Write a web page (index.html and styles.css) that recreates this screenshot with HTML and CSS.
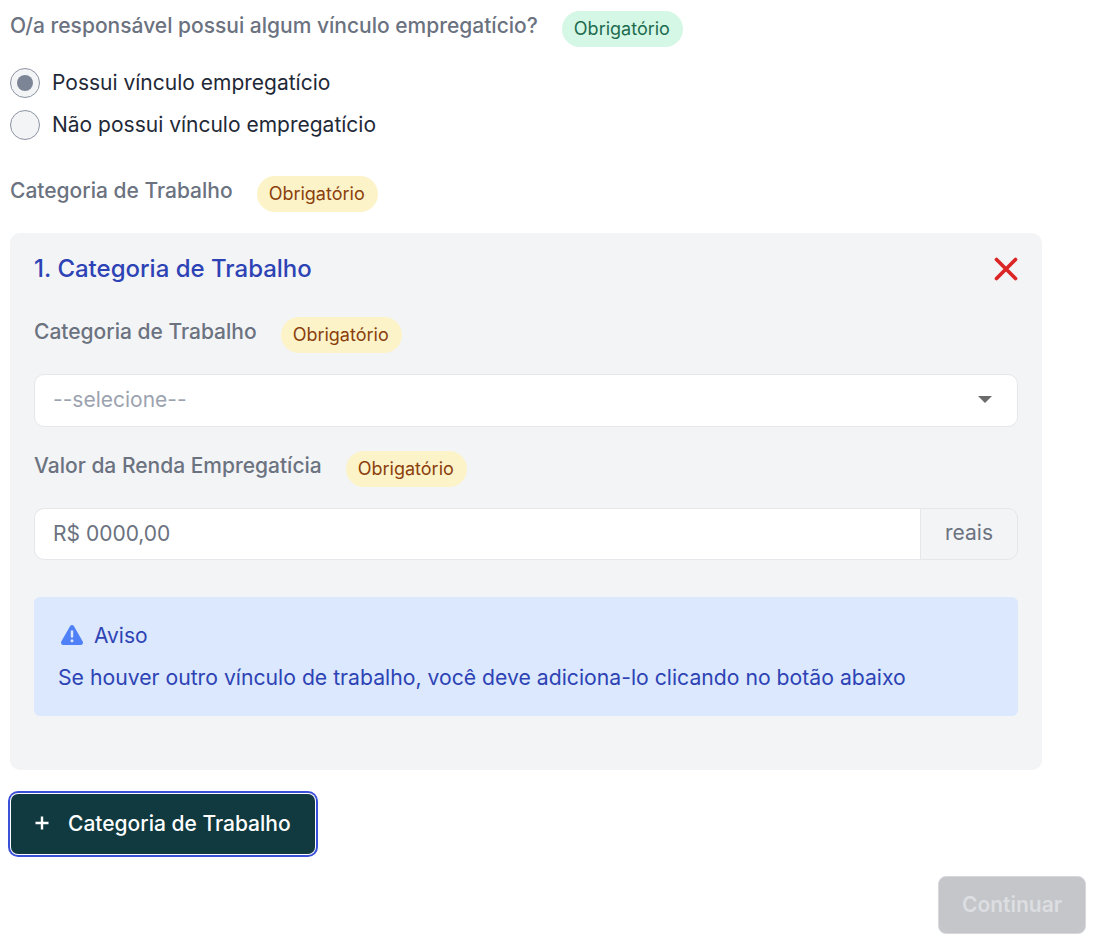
FILE: index.html
```html
<!DOCTYPE html>
<html lang="pt-BR">
<head>
    <meta charset="UTF-8">
    <title>Categoria de Trabalho</title>
    <link rel="stylesheet" href="styles.css">
</head>
<body>
<div class="page">
    <div class="field-label first">
        <span>O/a responsável possui algum vínculo empregatício?</span>
        <span class="badge badge-green">Obrigatório</span>
    </div>

    <div class="radio-row">
        <span class="radio checked"></span>
        <span class="radio-text">Possui vínculo empregatício</span>
    </div>
    <div class="radio-row">
        <span class="radio"></span>
        <span class="radio-text">Não possui vínculo empregatício</span>
    </div>

    <div class="field-label second">
        <span>Categoria de Trabalho</span>
        <span class="badge badge-yellow">Obrigatório</span>
    </div>

    <div class="card">
        <div class="card-head">
            <h2>1. Categoria de Trabalho</h2>
            <svg class="close" width="24" height="24" viewBox="0 0 24 24" fill="none" stroke="#dc2626" stroke-width="3.7" stroke-linecap="round">
                <path d="M2.500 2.500 L21.500 21.500 M21.500 2.500 L2.500 21.500"/>
            </svg>
        </div>

        <div class="field-label in-card">
            <span>Categoria de Trabalho</span>
            <span class="badge badge-yellow">Obrigatório</span>
        </div>
        <div class="select">
            <span>--selecione--</span>
            <span class="caret"></span>
        </div>

        <div class="field-label in-card-2">
            <span>Valor da Renda Empregatícia</span>
            <span class="badge badge-yellow">Obrigatório</span>
        </div>
        <div class="input-group">
            <div class="input">R$ 0000,00</div>
            <div class="addon">reais</div>
        </div>

        <div class="notice">
            <div class="notice-title">
                <svg width="24" height="22" viewBox="0 0 24 22">
                    <path fill="#4f80f7" fill-rule="evenodd" d="M10 2.2c.9-1.6 3.1-1.6 4 0l8.7 15.3c.9 1.6-.2 3.5-2 3.5H3.300c-1.800 0-2.900-1.900-2-3.500zM10.800 6.500h2.400v7h-2.400zM12 15.200a1.500 1.500 0 1 0 0 3 1.500 1.500 0 0 0 0-3z"/>
                </svg>
                <span>Aviso</span>
            </div>
            <p>Se houver outro vínculo de trabalho, você deve adiciona-lo clicando no botão abaixo</p>
        </div>
    </div>

    <button class="btn-add">
        <svg class="plus" width="14" height="14" viewBox="0 0 14 14" fill="none" stroke="#fff" stroke-width="2.4">
            <path d="M7 0.500 V13.500 M0.500 7 H13.500"/>
        </svg>
        <span>Categoria de Trabalho</span>
    </button>

    <div class="footer">
        <button class="btn-next" disabled>Continuar</button>
    </div>
</div>
</body>
</html>
```

FILE: styles.css
```css
* {
    box-sizing: border-box;
}

body {
    margin: 0;
    background: #fff;
    font-family: Inter, "Liberation Sans", sans-serif;
    font-size: 21px;
    color: #1f2937;
}

.page {
    padding: 11px 9px 0 10px;
}

.field-label {
    display: flex;
    align-items: flex-start;
    gap: 25px;
    color: #6b7280;
    font-size: 21px;
    font-weight: 450;
    line-height: 30px;
}

.field-label.second {
    margin-top: 30px;
}

.field-label.in-card {
    margin-top: 32px;
}

.field-label.in-card-2 {
    margin-top: 24px;
}

.badge {
    padding: 0 12px 0 12px;
    margin-left: -1px;
    border-radius: 18px;
    font-size: 18px;
    font-weight: 400;
    line-height: 36px;
    height: 36px;
    width: 121px;
}

.badge-green {
    background: #d5f7e5;
    color: #1d6b4f;
}

.badge-yellow {
    background: #fdf3c8;
    color: #8a3f0d;
}

.radio-row {
    display: flex;
    align-items: center;
    gap: 12px;
    height: 42px;
    color: #1f2937;
}

.radio-text {
    margin-top: -1px;
}

.first + .radio-row {
    margin-top: 15px;
}

.radio {
    width: 30px;
    height: 30px;
    border: 1px solid #8b93a1;
    border-radius: 50%;
    background: #f3f4f6;
    display: flex;
    align-items: center;
    justify-content: center;
}

.radio.checked::after {
    content: "";
    width: 16px;
    height: 16px;
    border-radius: 50%;
    background: #7c8595;
}

.card {
    margin-top: 21px;
    width: 1032px;
    height: 537px;
    padding: 18px 24px 0;
    background: #f3f4f6;
    border-radius: 10px;
}

.card-head {
    display: flex;
    align-items: center;
    justify-content: space-between;
    height: 34px;
}

.card-head h2 {
    margin: 0;
    color: #2d43b5;
    font-size: 24px;
    font-weight: 450;
}

.close {
    margin-top: 2px;
}

.select {
    display: flex;
    align-items: center;
    justify-content: space-between;
    margin-top: 21px;
    height: 53px;
    padding: 0 25px 2px 18px;
    background: #fff;
    border: 1px solid #e5e7eb;
    border-radius: 10px;
    color: #9ca3af;
}

.caret {
    width: 0;
    height: 0;
    border-left: 7px solid transparent;
    border-right: 7px solid transparent;
    border-top: 7px solid #6b6b6b;
}

.input-group {
    display: flex;
    margin-top: 21px;
    height: 52px;
}

.input {
    flex: 1;
    display: flex;
    align-items: center;
    padding: 0 0 2px 18px;
    background: #fff;
    border: 1px solid #e5e7eb;
    border-right: 0;
    border-radius: 10px 0 0 10px;
    color: #6b7280;
}

.addon {
    display: flex;
    align-items: center;
    justify-content: center;
    width: 98px;
    padding-bottom: 3px;
    background: #f3f4f6;
    border: 1px solid #e5e7eb;
    border-radius: 0 10px 10px 0;
    color: #6b7280;
}

.notice {
    margin-top: 37px;
    height: 119px;
    padding: 23px 24px 0;
    background: #dbe8fd;
    border-radius: 6px;
    color: #2d43b5;
}

.notice-title {
    display: flex;
    align-items: center;
    gap: 10px;
    height: 30px;
    padding-left: 2px;
}

.notice-title span {
    margin-top: 1px;
}

.notice p {
    margin: 12px 0 0;
    font-size: 21.2px;
    line-height: 30px;
}

.btn-add {
    display: flex;
    align-items: center;
    gap: 19px;
    margin: 24px 0 0 1px;
    width: 304px;
    height: 60px;
    padding: 0 0 2px 24px;
    background: #113a40;
    border: 0;
    border-radius: 7px;
    box-shadow: 0 0 0 1px #fff, 0 0 0 3px #3b50d9;
    color: #fff;
    font-family: inherit;
    font-size: 21px;
    font-weight: 540;
}

.footer {
    display: flex;
    justify-content: flex-end;
    margin-top: 22px;
}

.btn-next {
    width: 148px;
    height: 58px;
    padding-bottom: 2px;
    background: #c4c6ca;
    border: 1px solid #d6d8db;
    border-radius: 8px;
    color: #dcdee1;
    font-family: inherit;
    font-size: 21px;
    font-weight: 600;
}
```
